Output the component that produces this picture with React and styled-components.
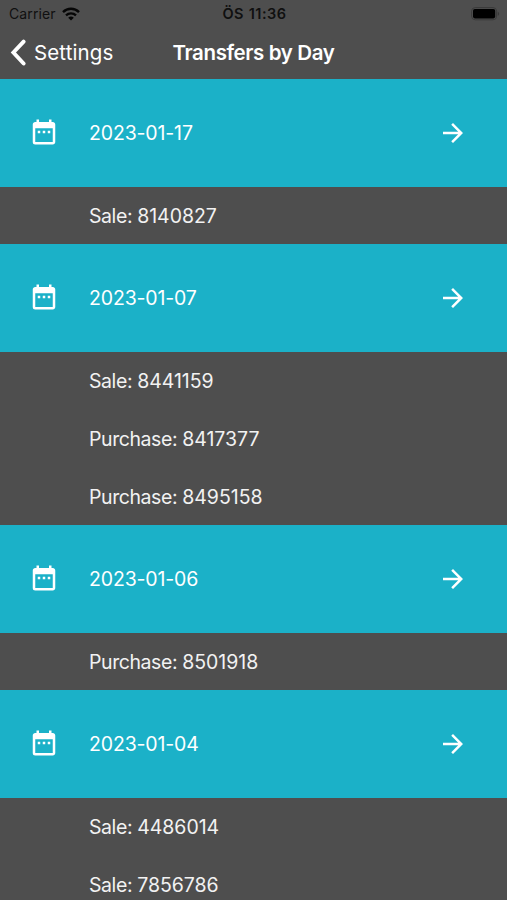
import React from "react";
import styled, { createGlobalStyle } from "styled-components";
import { MdArrowForward, MdDateRange } from "react-icons/md";

const days = [
  { date: "2023-01-17", transfers: [{ type: "Sale", id: "8140827" }] },
  {
    date: "2023-01-07",
    transfers: [
      { type: "Sale", id: "8441159" },
      { type: "Purchase", id: "8417377" },
      { type: "Purchase", id: "8495158" },
    ],
  },
  { date: "2023-01-06", transfers: [{ type: "Purchase", id: "8501918" }] },
  {
    date: "2023-01-04",
    transfers: [
      { type: "Sale", id: "4486014" },
      { type: "Sale", id: "7856786" },
    ],
  },
];

const WifiIcon = () => (
  <svg width="18" height="14" viewBox="0 0 18 14" fill="none" stroke="#060606">
    <path d="M1 5.1a11.4 11.4 0 0 1 16 0" strokeWidth="2.4" />
    <path d="M4 8.3a7.2 7.2 0 0 1 10 0" strokeWidth="2.3" />
    <path d="M9 13.6L6.2 10.8a4 4 0 0 1 5.6 0z" fill="#060606" stroke="none" />
  </svg>
);

const BatteryIcon = () => (
  <svg width="29" height="14" viewBox="0 0 29 14">
    <rect x="0.6" y="0.6" width="25" height="12.2" rx="3.6" fill="none" stroke="#3a3a3a" />
    <rect x="2" y="2" width="22.2" height="9.4" rx="1.8" fill="#000000" />
    <path d="M26.8 4.8c1.8.7 1.8 3.5 0 4.2z" fill="#3a3a3a" />
  </svg>
);

const BackIcon = () => (
  <svg width="16" height="28" viewBox="0 0 16 28" fill="none">
    <path
      d="M13.6 2.6L3.4 13.5l10.2 11"
      stroke="#ffffff"
      strokeWidth="3.9"
      strokeLinecap="round"
    />
  </svg>
);

export default function App() {
  return (
    <Screen>
      <GlobalStyle />

      <StatusBar>
        <Carrier>
          Carrier
          <WifiIcon />
        </Carrier>
        <Clock>ÖS 11:36</Clock>
        <Battery>
          <BatteryIcon />
        </Battery>
      </StatusBar>

      <NavBar>
        <BackButton>
          <BackIcon />
          <BackLabel>Settings</BackLabel>
        </BackButton>
        <Title>Transfers by Day</Title>
      </NavBar>

      {days.map((day) => (
        <section key={day.date}>
          <DayRow>
            <CalendarIcon size={30} />
            <DayLabel>{day.date}</DayLabel>
            <MdArrowForward size={30} />
          </DayRow>
          {day.transfers.map((item) => (
            <TransferRow key={item.id}>
              <TransferLabel>
                {item.type}: <TransferId>{item.id}</TransferId>
              </TransferLabel>
            </TransferRow>
          ))}
        </section>
      ))}
    </Screen>
  );
}

/* ----------------------------- STYLED COMPONENTS ----------------------------- */

const GlobalStyle = createGlobalStyle`
  * {
    box-sizing: border-box;
  }

  body {
    margin: 0;
    background: #4e4e4e;
    font-family: Inter, "Liberation Sans", sans-serif;
  }

  svg {
    display: block;
    flex-shrink: 0;
  }
`;

const Screen = styled.main`
  height: 900px;
  overflow: hidden;
  background: #4e4e4e;
  color: #ffffff;
`;

const StatusBar = styled.div`
  display: grid;
  grid-template-columns: 1fr auto 1fr;
  align-items: center;
  height: 27px;
  padding: 0 7px 0 9px;
  color: #101010;
`;

const Carrier = styled.div`
  display: flex;
  align-items: center;
  gap: 6px;
  font-size: 14px;
  letter-spacing: 0.1px;
`;

const Clock = styled.div`
  font-size: 14.5px;
  font-weight: 600;
  letter-spacing: 0.5px;
  word-spacing: 0.6px;
`;

const Battery = styled.div`
  justify-self: end;
`;

const NavBar = styled.header`
  display: grid;
  grid-template-columns: 1fr auto 1fr;
  align-items: center;
  height: 52px;
  padding: 0 10px;
`;

const BackButton = styled.button`
  display: flex;
  align-items: center;
  gap: 8px;
  padding: 0;
  background: none;
  border: none;
  color: #ffffff;
  font-family: inherit;
  cursor: pointer;
`;

const BackLabel = styled.span`
  font-size: 20.5px;
  line-height: 28px;
  letter-spacing: 0.12px;
`;

const Title = styled.h1`
  margin: 0;
  font-size: 20.5px;
  font-weight: 600;
  line-height: 28px;
  letter-spacing: -0.38px;
`;

const DayRow = styled.div`
  display: flex;
  align-items: center;
  height: 107.5px;
  padding: 0 39px 0 29px;
  background: #1bb1c8;
`;

const CalendarIcon = styled(MdDateRange)`
  margin-bottom: 2px;
`;

const DayLabel = styled.span`
  flex: 1;
  padding-left: 30px;
  font-size: 19.5px;
  letter-spacing: -0.15px;
`;

const TransferRow = styled.div`
  display: flex;
  align-items: center;
  height: 57.8px;
  padding: 1px 0 0 89px;
`;

const TransferLabel = styled.span`
  color: #f2f2f2;
  font-size: 19.5px;
  letter-spacing: -0.42px;
`;

const TransferId = styled.span`
  letter-spacing: -0.02px;
`;
